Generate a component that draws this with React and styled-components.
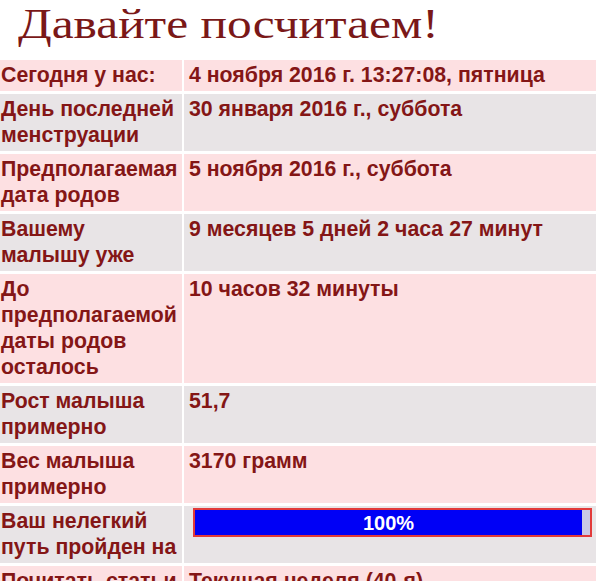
import React from "react";
import styled, { createGlobalStyle } from "styled-components";

const Global = createGlobalStyle`
  html, body { margin: 0; padding: 0; background: #ffffff; }
  body { width: 602px; height: 581px; overflow: hidden; }
`;

const Page = styled.div`
  display: flex;
  flex-direction: column;
`;

const Header = styled.header`
  height: 60px;
  padding-left: 18px;
`;

const Title = styled.h1`
  display: inline-block;
  margin: 0;
  font-family: "Liberation Serif", "Times New Roman", serif;
  font-weight: normal;
  font-size: 41.5px;
  line-height: 48px;
  white-space: nowrap;
  color: #7a1818;
  transform: scaleX(1.19);
  transform-origin: 0 0;
`;

const Grid = styled.div`
  display: grid;
  grid-template-columns: 182px 412px;
  column-gap: 2px;
  row-gap: 3px;
  font-family: "Liberation Sans", Arial, sans-serif;
  font-weight: bold;
  font-size: 21.3px;
  line-height: 26px;
  color: #841616;
`;

const Cell = styled.div`
  background: ${(p) => (p.$tone === "gray" ? "#e8e4e6" : "#fde0e2")};
  padding: ${(p) => (p.$label ? "2px 5px 3px 1px" : "2px 4px 3px 5px")};
`;

const Progress = styled.div`
  box-sizing: border-box;
  display: flex;
  margin: 0 0 0 4px;
  height: 29px;
  border: 2px solid #e23a3a;
  background: #c9c9e6;
`;

const Fill = styled.div`
  display: flex;
  align-items: center;
  justify-content: center;
  background: #0000f6;
  color: #ffffff;
  font-size: 20px;
  line-height: 22px;
`;

const rows = [
  ["Сегодня у нас:", "4 ноября 2016 г. 13:27:08, пятница"],
  ["День последней менструации", "30 января 2016 г., суббота"],
  ["Предполагаемая дата родов", "5 ноября 2016 г., суббота"],
  ["Вашему малышу уже", "9 месяцев 5 дней 2 часа 27 минут"],
  ["До предполагаемой даты родов осталось", "10 часов 32 минуты"],
  ["Рост малыша примерно", "51,7"],
  ["Вес малыша примерно", "3170 грамм"],
];

export default function App() {
  const percent = 100;
  return (
    <Page>
      <Global />
      <Header>
        <Title>Давайте посчитаем!</Title>
      </Header>
      <Grid>
        {rows.map(([label, value], i) => {
          const tone = i % 2 === 0 ? "pink" : "gray";
          return (
            <React.Fragment key={label}>
              <Cell $label $tone={tone}>{label}</Cell>
              <Cell $tone={tone}>{value}</Cell>
            </React.Fragment>
          );
        })}
        <Cell $label $tone="gray">Ваш нелегкий путь пройден на</Cell>
        <Cell $tone="gray">
          <Progress>
            <Fill style={{ width: `${percent * 0.98}%` }}>{percent}%</Fill>
          </Progress>
        </Cell>
        <Cell $label $tone="pink">Почитать статьи</Cell>
        <Cell $tone="pink">Текущая неделя (40-я)</Cell>
      </Grid>
    </Page>
  );
}
